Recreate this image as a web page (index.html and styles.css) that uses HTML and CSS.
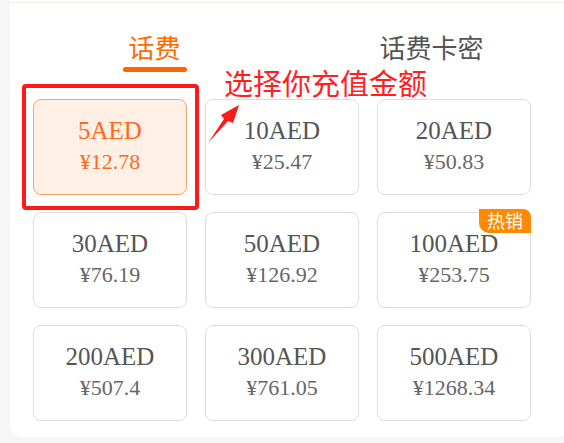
FILE: index.html
```html
<!DOCTYPE HTML>
<html lang="zh-CN">
<head>
    <meta charset="UTF-8">
    <title>话费充值</title>
    <link rel="stylesheet" href="styles.css">
</head>
<body>
    <div class="panel">
        <div class="topline"></div>
        <div class="tabs">
            <div class="tab active">话费<div class="bar"></div></div>
            <div class="tab">话费卡密</div>
        </div>
        <ul class="grid">
            <li class="card on"><p class="amount">5AED</p><p class="price">¥12.78</p></li>
            <li class="card"><p class="amount">10AED</p><p class="price">¥25.47</p></li>
            <li class="card"><p class="amount">20AED</p><p class="price">¥50.83</p></li>
            <li class="card"><p class="amount">30AED</p><p class="price">¥76.19</p></li>
            <li class="card"><p class="amount">50AED</p><p class="price">¥126.92</p></li>
            <li class="card"><span class="hot">热销</span><p class="amount">100AED</p><p class="price">¥253.75</p></li>
            <li class="card"><p class="amount">200AED</p><p class="price">¥507.4</p></li>
            <li class="card"><p class="amount">300AED</p><p class="price">¥761.05</p></li>
            <li class="card"><p class="amount">500AED</p><p class="price">¥1268.34</p></li>
        </ul>
    </div>

    <!-- 标注 -->
    <div class="mark-box"></div>
    <div class="mark-text">选择你充值金额</div>
    <svg class="mark-arrow" width="50" height="50" viewBox="200 100 50 50">
        <polygon points="208,143 224,119 221,115 239,105 233,123 228,121" fill="#ff1a1a"/>
    </svg>
</body>
</html>
```

FILE: styles.css
```css
body{margin:0;background:#f6f6f6;font-family:"Liberation Serif","Noto Sans CJK SC",serif;}
p{margin:0;}
ul,li{margin:0;padding:0;list-style:none;}

.panel{
    width:560px;
    height:437px;
    margin-left:10px;
    background:#fff;
    border-radius:0 0 12px 12px;
    overflow:hidden;
}
.topline{
    height:1px;
    margin-top:2px;
    background:#fdf0e3;
}
.tabs{
    display:flex;
    padding:31px 0 0 6px;
    font-family:"Noto Sans CJK SC",sans-serif;
}
.tab{
    width:280px;
    font-size:26px;
    line-height:26px;
    color:#555;
    text-align:center;
}
.tab.active{color:#ff6a00;}
.tab .bar{
    width:64px;
    height:5px;
    margin:7px auto 0;
    border-radius:3px;
    background:#ff6600;
}
.grid{
    display:grid;
    grid-template-columns:repeat(3,154px);
    grid-auto-rows:96px;
    gap:17px 18px;
    margin:27px 0 0 23px;
}
.card{
    position:relative;
    display:flex;
    flex-direction:column;
    align-items:center;
    justify-content:center;
    gap:2px;
    padding-bottom:3px;
    box-sizing:border-box;
    border:1px solid #ddd;
    border-radius:8px;
    color:#555;
}
.card .amount{font-size:25px;line-height:30px;}
.card .price{font-size:22px;line-height:28px;color:#666;}
.card.on{
    background:#fff0e5;
    border-color:#f7a468;
}
.card.on .amount,.card.on .price{color:#ff6a1a;}
.hot{
    position:absolute;
    top:-4px;
    right:-1px;
    width:52px;
    height:24px;
    border-radius:0 8px 0 10px;
    background:#ff8a00;
    color:#fff;
    font-family:"Noto Sans CJK SC",sans-serif;
    font-size:18px;
    line-height:23px;
    text-align:center;
}

.mark-box{
    position:absolute;
    left:22px;
    top:84px;
    width:177px;
    height:126px;
    box-sizing:border-box;
    border:4px solid #ff1a1a;
    border-radius:4px;
}
.mark-text{
    position:absolute;
    left:224px;
    top:65px;
    font-family:"Noto Sans CJK SC",sans-serif;
    font-size:29px;
    line-height:34px;
    color:#ff1f1f;
}
.mark-arrow{
    position:absolute;
    left:200px;
    top:100px;
}
```
